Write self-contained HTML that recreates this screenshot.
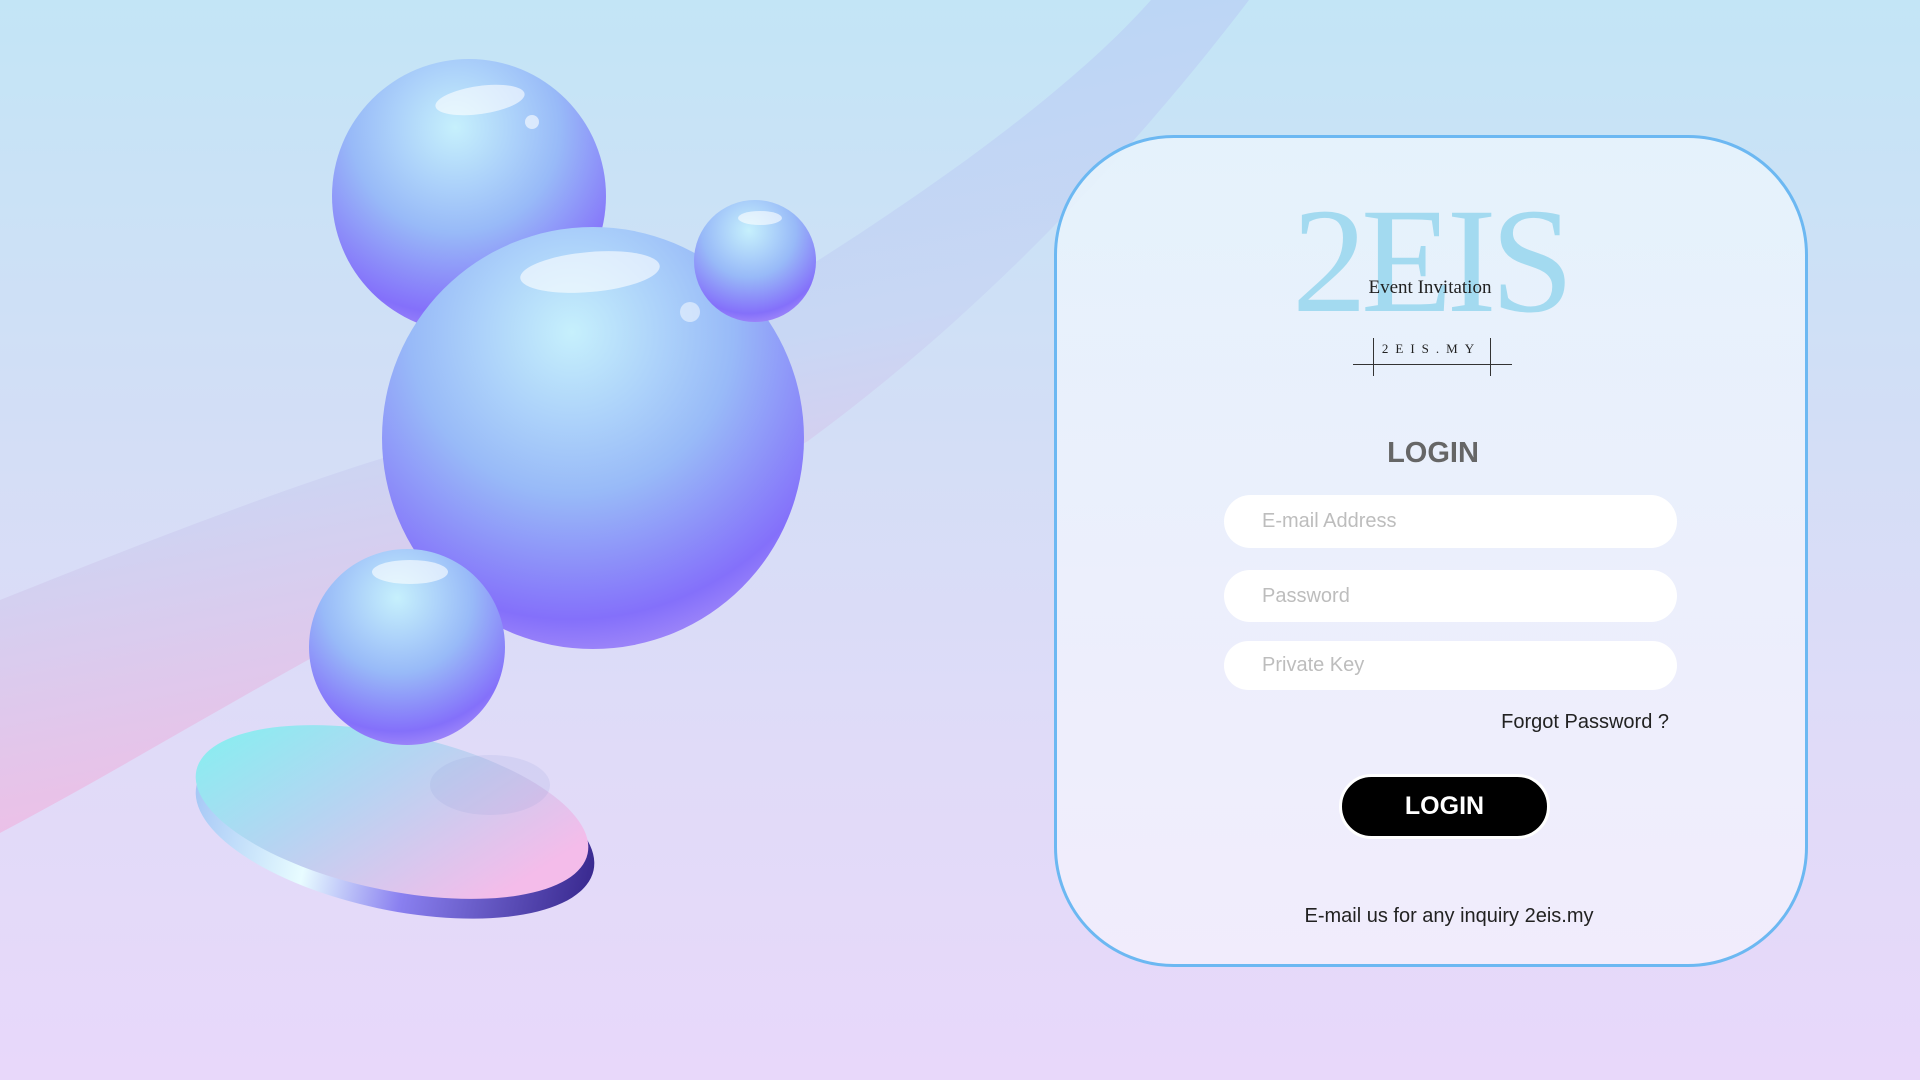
<!DOCTYPE html>
<html><head><meta charset="utf-8"><style>
html,body{margin:0;padding:0;width:1920px;height:1080px;overflow:hidden;font-family:"Liberation Sans",sans-serif}
body{background:linear-gradient(180deg,#c3e5f6 0%,#d3def6 40%,#e0dbf8 70%,#e8d8fa 100%);position:relative}
svg.bg{position:absolute;left:0;top:0}
.card{position:absolute;left:1054px;top:135px;width:748px;height:826px;border:3px solid #6cb8f2;border-radius:120px;background:linear-gradient(180deg,rgba(232,244,252,.9),rgba(242,238,252,.92))}
.abs{position:absolute}
.inp{position:absolute;left:1224px;width:453px;background:#fff;border-radius:27px;color:#bdbdbd;font-size:20px;box-sizing:border-box;padding-left:38px;display:flex;align-items:center}
</style></head><body>
<svg class="bg" width="1920" height="1080" viewBox="0 0 1920 1080">
<defs>
<linearGradient id="tubeV" x1="0" y1="0" x2="0.3" y2="1">
<stop offset="0" stop-color="#b0d2f6"/><stop offset=".55" stop-color="#c8d6f4"/><stop offset="1" stop-color="#f4b8e2"/></linearGradient>
<linearGradient id="tubeFade" x1="0" y1="0" x2="1" y2="0">
<stop offset="0" stop-color="#fff" stop-opacity="0"/><stop offset="1" stop-color="#fff" stop-opacity="0"/></linearGradient>
<radialGradient id="bub" cx=".45" cy=".25" r=".85">
<stop offset="0" stop-color="#c6f0fc"/><stop offset=".45" stop-color="#98baf8"/><stop offset=".8" stop-color="#8470fa"/><stop offset="1" stop-color="#b89cf8"/></radialGradient>
<linearGradient id="disk" x1="0" y1="0" x2="1" y2=".4">
<stop offset="0" stop-color="#7ef4f0"/><stop offset=".5" stop-color="#b6d4f2"/><stop offset="1" stop-color="#f4bcea"/></linearGradient>
<linearGradient id="diskEdge" x1="0" y1="0" x2="1" y2="0">
<stop offset="0" stop-color="#a6c8f6"/><stop offset=".3" stop-color="#e8fcff"/><stop offset=".55" stop-color="#8a80f0"/><stop offset="1" stop-color="#3a2a90"/></linearGradient>
</defs>
<path d="M0 600 C 150 540, 280 490, 380 459 C 560 400, 700 330, 814 263 C 960 170, 1080 80, 1151 0 L1249 0 C 1150 130, 1000 300, 808 441 C 600 560, 400 610, 306 661 C 200 720, 100 780, 0 833 Z" fill="url(#tubeV)" opacity=".9"/>
<ellipse cx="395" cy="828" rx="203" ry="82" transform="rotate(12 395 828)" fill="url(#diskEdge)"/>
<ellipse cx="392" cy="812" rx="200" ry="78" transform="rotate(12 392 812)" fill="url(#disk)"/>
<ellipse cx="490" cy="785" rx="60" ry="30" fill="#8a98d8" opacity=".15"/>
<circle cx="469" cy="196" r="137" fill="url(#bub)"/>
<circle cx="593" cy="438" r="211" fill="url(#bub)"/>
<circle cx="755" cy="261" r="61" fill="url(#bub)"/>
<circle cx="407" cy="647" r="98" fill="url(#bub)"/>
<ellipse cx="480" cy="100" rx="45" ry="14" fill="#fff" opacity=".6" transform="rotate(-8 480 100)"/>
<ellipse cx="590" cy="272" rx="70" ry="20" fill="#fff" opacity=".6" transform="rotate(-5 590 272)"/>
<ellipse cx="760" cy="218" rx="22" ry="7" fill="#fff" opacity=".6"/>
<ellipse cx="410" cy="572" rx="38" ry="12" fill="#fff" opacity=".6"/>
<circle cx="690" cy="312" r="10" fill="#fff" opacity=".5"/>
<circle cx="532" cy="122" r="7" fill="#fff" opacity=".6"/>
</svg>
<div class="card"></div>
<div class="abs" style="left:1280px;top:196px;width:300px;text-align:center;font-family:'Liberation Serif',serif;font-size:150px;line-height:130px;color:#a3daf0;letter-spacing:-6px">2EIS</div>
<div class="abs" style="left:1280px;top:277px;width:300px;text-align:center;font-family:'Liberation Serif',serif;font-size:19px;color:#222">Event Invitation</div>
<div class="abs" style="left:1373px;top:338px;width:1px;height:38px;background:#333"></div>
<div class="abs" style="left:1490px;top:338px;width:1px;height:38px;background:#333"></div>
<div class="abs" style="left:1353px;top:364px;width:159px;height:1px;background:#333"></div>
<div class="abs" style="left:1373px;top:341px;width:117px;text-align:center;font-family:'Liberation Serif',serif;font-size:13px;letter-spacing:7px;color:#222">2EIS.MY</div>
<div class="abs" style="left:1300px;top:437px;width:266px;text-align:center;font-weight:bold;font-size:29px;color:#666">LOGIN</div>
<div class="inp" style="top:495px;height:53px">E-mail Address</div>
<div class="inp" style="top:570px;height:52px">Password</div>
<div class="inp" style="top:641px;height:49px">Private Key</div>
<div class="abs" style="left:1400px;top:711px;width:269px;text-align:right;font-size:20px;color:#222">Forgot Password ?</div>
<div class="abs" style="left:1339px;top:774px;width:205px;height:59px;background:#000;border:3px solid #fff;border-radius:33px;color:#fff;font-weight:bold;font-size:25px;display:flex;align-items:center;justify-content:center">LOGIN</div>
<div class="abs" style="left:1200px;top:905px;width:498px;text-align:center;font-size:20px;color:#222">E-mail us for any inquiry 2eis.my</div>
</body></html>
